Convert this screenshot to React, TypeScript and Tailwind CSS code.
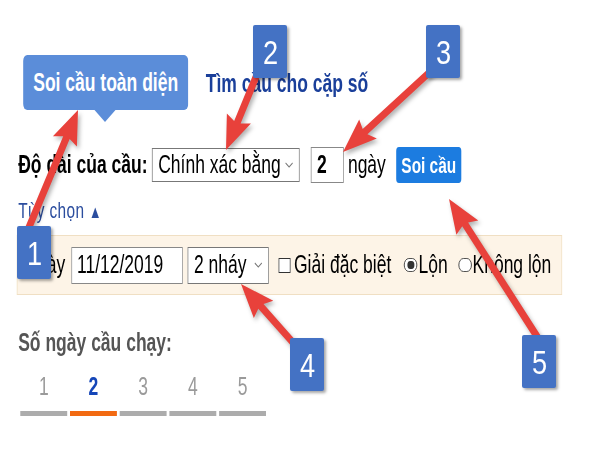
import React from 'react';

type Pt = [number, number];

// red callout arrows, drawn in page pixels
const arrows: { tail: Pt; tip: Pt }[] = [
  { tail: [27, 232], tip: [78, 110] },
  { tail: [258, 72], tip: [226, 150] },
  { tail: [432, 70], tip: [343, 152] },
  { tail: [296, 346], tip: [241, 284] },
  { tail: [538, 338], tip: [449, 199] },
];

const badges = [
  { n: '1', cls: 'left-[17px] top-[226px]' },
  { n: '2', cls: 'left-[253px] top-[25px]' },
  { n: '3', cls: 'left-[426px] top-[25px]' },
  { n: '4', cls: 'left-[290px] top-[338px]' },
  { n: '5', cls: 'left-[522px] top-[335px]' },
];

function arrowPoints(tail: Pt, tip: Pt) {
  const dx = tip[0] - tail[0];
  const dy = tip[1] - tail[1];
  const len = Math.hypot(dx, dy);
  const ux = dx / len;
  const uy = dy / len;
  const nx = -uy;
  const ny = ux;
  const head = 30;
  const shaft = 3.5;
  const wing = 13;
  const bx = tip[0] - ux * head;
  const by = tip[1] - uy * head;
  const bx2 = tip[0] - ux * (head + 4);
  const by2 = tip[1] - uy * (head + 4);
  const pts: Pt[] = [
    [tail[0] + nx * shaft, tail[1] + ny * shaft],
    [bx + nx * shaft, by + ny * shaft],
    [bx2 + nx * wing, by2 + ny * wing],
    tip,
    [bx2 - nx * wing, by2 - ny * wing],
    [bx - nx * shaft, by - ny * shaft],
    [tail[0] - nx * shaft, tail[1] - ny * shaft],
  ];
  return pts.map((p) => p.join(',')).join(' ');
}

const Chevron = () => (
  <svg width="12" height="6" viewBox="0 0 12 6" className="ml-auto shrink-0">
    <path d="M1 1l5 4 5-4" fill="none" stroke="#777" strokeWidth="1.2" />
  </svg>
);

const tabs = ['1', '2', '3', '4', '5'];

export default function App() {
  return (
    <div className="relative w-[600px] h-[450px] overflow-hidden bg-white font-['Liberation_Sans',Arial,sans-serif]">
      {/* page content, squeezed horizontally */}
      <div className="w-[857px] origin-top-left scale-x-[0.7] pl-[26px] pt-[55px] text-[25px]">
        {/* tabs */}
        <div className="flex items-start">
          <div className="relative ml-[7px] flex h-[55px] w-[236px] items-center justify-center whitespace-nowrap rounded-md bg-[#5b8dd9] font-bold text-white">
            Soi cầu toàn diện
            <div className="absolute left-[102px] top-[55px] h-0 w-0 border-x-[15px] border-t-[12px] border-x-transparent border-t-[#5b8dd9]" />
          </div>
          <div className="ml-[25px] flex h-[55px] items-center whitespace-nowrap pt-[2px] font-bold text-[#1a3f9a]">
            Tìm cầu cho cặp số
          </div>
        </div>

        {/* length row */}
        <div className="mt-[36px] flex h-[38px] items-center whitespace-nowrap text-black">
          <span className="w-[186px] font-bold">Độ dài của cầu:</span>
          <div className="ml-[5px] flex h-[34px] w-[211px] items-center border border-[#777] bg-white px-[8px]">
            <span>Chính xác bằng</span>
            <Chevron />
          </div>
          <div className="ml-[16px] flex h-[36px] w-[47px] items-center border border-[#888] pl-[8px] font-bold">2</div>
          <span className="ml-[6px] w-[63px]">ngày</span>
          <button className="ml-[6px] flex h-[36px] w-[93px] items-center justify-center rounded-[4px] bg-[#1c7ce0] text-[22px] font-bold text-white">
            Soi cầu
          </button>
        </div>

        {/* options toggle */}
        <div className="mt-[15px] whitespace-nowrap text-[22px] leading-[24px] tracking-[0.5px] text-[#2b4d9e]">
          Tùy chọn <span className="text-[18px]">▲</span>
        </div>

        {/* options panel */}
        <div className="-ml-[2px] mt-[11px] flex h-[60px] w-[779px] items-center whitespace-nowrap border border-[#f0dfc3] bg-[#fdf4e7] pl-[10px] text-black">
          <span className="w-[60px]">Ngày</span>
          <div className="ml-[7px] flex h-[37px] w-[159px] items-center border border-[#888] bg-white pl-[7px]">11/12/2019</div>
          <div className="ml-[7px] flex h-[37px] w-[116px] items-center border border-[#777] bg-white px-[8px]">
            <span>2 nháy</span>
            <Chevron />
          </div>
          <span className="ml-[14px] inline-block h-[15px] w-[17px] border border-[#333] bg-white" />
          <span className="ml-[5px] w-[153px]">Giải đặc biệt</span>
          <span className="ml-[4px] flex h-[14px] w-[19px] items-center justify-center rounded-full border border-[#333] bg-white">
            <span className="h-[8px] w-[10px] rounded-full bg-[#333]" />
          </span>
          <span className="ml-[2px] w-[41px]">Lộn</span>
          <span className="ml-[16px] h-[14px] w-[19px] rounded-full border border-[#333] bg-white" />
          <span className="ml-[1px] w-[116px]">Không lộn</span>
        </div>

        {/* running days */}
        <div className="mt-[33px] whitespace-nowrap font-bold leading-[28px] text-[#555]">Số ngày cầu chạy:</div>
        <div className="ml-[3px] mt-[15px] flex gap-[4px]">
          {tabs.map((t) => (
            <div key={t} className="flex w-[67px] flex-col items-center">
              <span className={t === '2' ? 'font-bold leading-[30px] text-[#1546b8]' : 'leading-[30px] text-[#9a9a9a]'}>{t}</span>
              <span className={t === '2' ? 'mt-[10px] h-[5px] w-full bg-[#f26a12]' : 'mt-[10px] h-[5px] w-full bg-[#acacac]'} />
            </div>
          ))}
        </div>
      </div>

      {/* callout arrows */}
      <svg className="absolute left-0 top-0 drop-shadow-[2px_3px_2px_rgba(0,0,0,0.3)]" width="600" height="450">
        {arrows.map((a, i) => (
          <polygon key={i} points={arrowPoints(a.tail, a.tip)} fill="#e8413b" />
        ))}
      </svg>

      {/* numbered markers */}
      {badges.map((b) => (
        <div
          key={b.n}
          className={`absolute flex h-[53px] w-[34px] items-center justify-center rounded-[2px] bg-[#4472c4] text-white shadow-[2px_2px_3px_rgba(0,0,0,0.35)] ${b.cls}`}
        >
          <span className="inline-block scale-x-[0.8] text-[34px] leading-none">{b.n}</span>
        </div>
      ))}
    </div>
  );
}
